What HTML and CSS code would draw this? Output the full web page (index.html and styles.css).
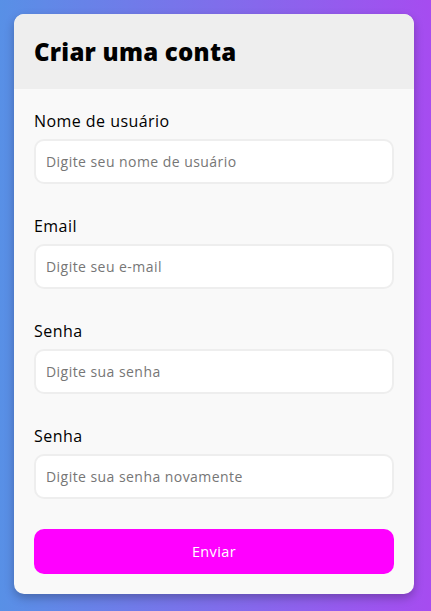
FILE: index.html
```html
<!DOCTYPE html>
<html lang="pt">
<head>
<meta charset="utf-8">
<link rel="stylesheet" href="styles.css">
</head>
<body>
<div class="card">
  <div class="card-header"><h1 class="title">Criar uma conta</h1></div>
  <form class="card-body">
    <div class="field">
      <label class="label">Nome de usuário</label>
      <input class="input" type="text" placeholder="Digite seu nome de usuário">
    </div>
    <div class="field">
      <label class="label">Email</label>
      <input class="input" type="text" placeholder="Digite seu e-mail">
    </div>
    <div class="field">
      <label class="label">Senha</label>
      <input class="input" type="password" placeholder="Digite sua senha">
    </div>
    <div class="field">
      <label class="label">Senha</label>
      <input class="input" type="password" placeholder="Digite sua senha novamente">
    </div>
    <button class="btn" type="button">Enviar</button>
  </form>
</div>
</body>
</html>
```
FILE: styles.css
```css
html, body { margin: 0; padding: 0; height: 100%; }
body {
  background: linear-gradient(to right, #5890e6, #a64cf0);
  font-family: "Open Sans", "Noto Sans", sans-serif;
  padding: 14px;
  box-sizing: border-box;
}
.card {
  width: 400px;
  border-radius: 10px;
  overflow: hidden;
  background: #f9f9f9;
  box-shadow: 0 4px 10px rgba(0,0,0,0.25);
}
.card-header {
  background: #eeeeee;
  padding: 20px 20px 19px;
}
.title {
  margin: 0;
  font-size: 24px;
  line-height: 36px;
  font-weight: 800;
  letter-spacing: 0.25px;
  color: #000;
}
.card-body {
  padding: 20px 20px 20px;
  display: flex;
  flex-direction: column;
  gap: 30px;
}
.field { display: flex; flex-direction: column; gap: 6px; }
.label { font-size: 16px; line-height: 24px; color: #000; letter-spacing: 0.45px; }
.input {
  height: 45px;
  box-sizing: border-box;
  border: 2px solid #eeeeee;
  border-radius: 10px;
  background: #fff;
  padding: 0 10px;
  font-family: inherit;
  font-size: 14px;
  letter-spacing: 0.45px;
  color: #333;
  outline: none;
}
.input::placeholder { color: #767676; }
.btn {
  height: 45px;
  border: none;
  border-radius: 10px;
  background: #ff00ff;
  color: #fff;
  font-family: inherit;
  font-size: 14.5px;
  font-weight: 500;
  letter-spacing: 0.4px;
}
```
